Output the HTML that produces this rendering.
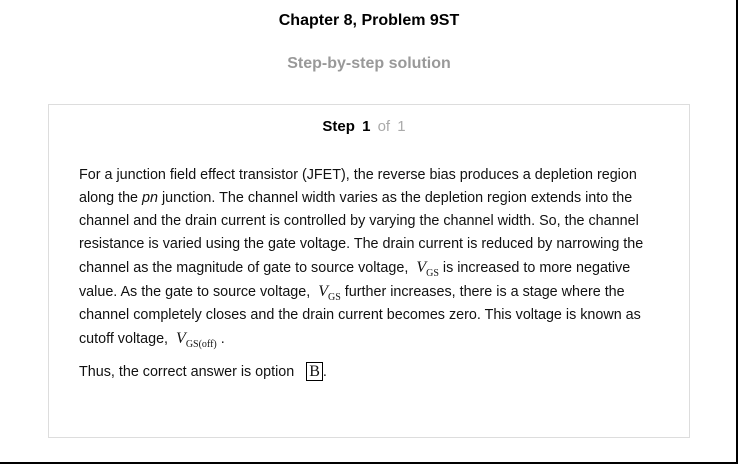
<!DOCTYPE html>
<html><head><style>
body{margin:0;width:738px;height:464px;position:relative;background:#fff;font-family:"Liberation Sans",Arial,sans-serif;overflow:hidden}
.frame{position:absolute;left:0;top:0;width:736px;height:462px;border-right:2px solid #000;border-bottom:2px solid #000}
h1{position:absolute;top:12px;left:0;width:738px;text-align:center;font-size:16px;font-weight:bold;margin:0;color:#000}
h2{position:absolute;top:55px;left:0;width:738px;text-align:center;font-size:16px;font-weight:bold;margin:0;color:#999}
.box{position:absolute;left:48px;top:104px;width:640px;height:332px;border:1px solid #ddd}
.step{position:absolute;top:118px;left:0;width:728px;text-align:center;font-size:15px;word-spacing:3px}
.l{position:absolute;left:79px;font-size:14.35px;color:#111;white-space:nowrap}
.v{font-family:"Liberation Serif",serif;font-style:italic;font-size:16px}
.s{font-family:"Liberation Serif",serif;font-size:10px;position:relative;top:4px}
.b{display:inline-block;border:1px solid #000;font-family:"Liberation Serif",serif;font-size:16px;padding:0 2px;line-height:17px}
</style></head><body>
<div class="frame"></div>
<h1>Chapter 8, Problem 9ST</h1>
<h2>Step-by-step solution</h2>
<div class="box"></div>
<div class="step"><b>Step 1</b> <span style="color:#aaa">of 1</span></div>
<div class="l" style="top:167px">For a junction field effect transistor (JFET), the reverse bias produces a depletion region</div>
<div class="l" style="top:190px">along the <i>pn</i> junction. The channel width varies as the depletion region extends into the</div>
<div class="l" style="top:213px">channel and the drain current is controlled by varying the channel width. So, the channel</div>
<div class="l" style="top:236px">resistance is varied using the gate voltage. The drain current is reduced by narrowing the</div>
<div class="l" style="top:259px">channel as the magnitude of gate to source voltage, &nbsp;<span class="v">V</span><span class="s">GS</span> is increased to more negative</div>
<div class="l" style="top:283px">value. As the gate to source voltage, &nbsp;<span class="v">V</span><span class="s">GS</span> further increases, there is a stage where the</div>
<div class="l" style="top:307px">channel completely closes and the drain current becomes zero. This voltage is known as</div>
<div class="l" style="top:330px">cutoff voltage, &nbsp;<span class="v">V</span><span class="s">GS(off)</span> .</div>
<div class="l" style="top:362px">Thus, the correct answer is option &nbsp;&nbsp;<span class="b">B</span>.</div>
</body></html>
